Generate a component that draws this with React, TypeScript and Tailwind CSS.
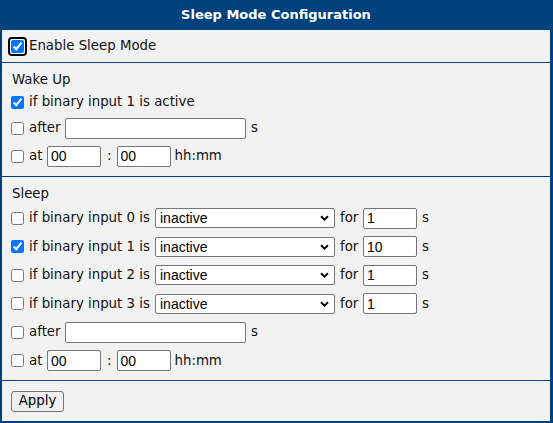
import React from "react";

const font = "font-['DejaVu_Sans',Verdana,sans-serif]";
const fieldFont = "font-['Liberation_Sans',Arial,sans-serif] text-[14px]";

function Check({ on = false }: { on?: boolean }) {
  return (
    <input
      type="checkbox"
      defaultChecked={on}
      className="w-[13px] h-[13px] shrink-0 accent-[#0075ff]"
    />
  );
}

function Field({ value = "", w }: { value?: string; w: string }) {
  return (
    <input
      type="text"
      defaultValue={value}
      className={`${w} h-[21px] shrink-0 bg-white border border-[#767676] rounded-[2px] pl-[3px] text-black ${fieldFont}`}
    />
  );
}

function Select() {
  return (
    <div
      className={`w-[180px] h-[20px] shrink-0 bg-white border border-[#767676] rounded-[2px] pl-[4px] pr-[5px] flex items-center justify-between text-black ${fieldFont}`}
    >
      <span>inactive</span>
      <svg width="9" height="6" viewBox="0 0 9 6">
        <path d="M1 1.2 L4.5 4.6 L8 1.2" fill="none" stroke="#000" strokeWidth="1.9" />
      </svg>
    </div>
  );
}

function After({ h }: { h: string }) {
  return (
    <div className={`${h} flex items-center pl-[9px]`}>
      <Check />
      <span className="ml-[5px] w-[31px] shrink-0">after</span>
      <span className="ml-[5px]">
        <Field w="w-[181px]" />
      </span>
      <span className="ml-[5px]">s</span>
    </div>
  );
}

function At({ h }: { h: string }) {
  return (
    <div className={`${h} flex items-center pl-[9px]`}>
      <Check />
      <span className="ml-[5px] w-[13px] shrink-0">at</span>
      <span className="ml-[5px]">
        <Field value="00" w="w-[54px]" />
      </span>
      <span className="ml-[6px]">:</span>
      <span className="ml-[5px]">
        <Field value="00" w="w-[54px]" />
      </span>
      <span className="ml-[4px]">hh:mm</span>
    </div>
  );
}

const sleepInputs = [
  { n: 0, on: false, t: "1" },
  { n: 1, on: true, t: "10" },
  { n: 2, on: false, t: "1" },
  { n: 3, on: false, t: "1" },
];

export default function App() {
  return (
    <div className={`w-[553px] h-[423px] ${font} text-[13.33px] leading-[16px] text-[#111]`}>
      <div className="h-full flex flex-col bg-[#00427e] pl-[2px] pr-[3px] pb-[2px]">
        <div className="h-[30px] flex items-center justify-center font-bold text-[13px] text-white">
          Sleep Mode Configuration
        </div>

        <div className="h-[32px] flex items-center pl-[6px] bg-[#f2f2f2]">
          <span className="border-2 border-black rounded-[4px] p-[1px] flex bg-white">
            <Check on />
          </span>
          <span className="ml-[2px]">Enable Sleep Mode</span>
        </div>

        <div className="h-[113px] mt-px bg-[#f2f2f2] pt-[7px]">
          <div className="h-[20px] flex items-center pl-[10px]">Wake Up</div>
          <div className="h-[24px] flex items-center pl-[9px]">
            <Check on />
            <span className="ml-[5px]">if binary input 1 is active</span>
          </div>
          <After h="h-[28px]" />
          <At h="h-[28px]" />
        </div>

        <div className="h-[203px] mt-px bg-[#f2f2f2] pt-[7px]">
          <div className="h-[20px] flex items-center pl-[10px]">Sleep</div>
          {sleepInputs.map((r) => (
            <div key={r.n} className="h-[28.5px] flex items-center pl-[9px]">
              <Check on={r.on} />
              <span className="ml-[5px] w-[126px] shrink-0">if binary input {r.n} is</span>
              <Select />
              <span className="ml-[5px] w-[18px] shrink-0">for</span>
              <span className="ml-[5px]">
                <Field value={r.t} w="w-[54px]" />
              </span>
              <span className="ml-[5px]">s</span>
            </div>
          ))}
          <After h="h-[28.5px]" />
          <At h="h-[28.5px]" />
        </div>

        <div className="flex-1 mt-px bg-[#f2f2f2] flex items-center pl-[9px]">
          <button className="w-[53px] h-[21px] bg-[#efefef] border border-[#767676] rounded-[3px] text-black">
            Apply
          </button>
        </div>
      </div>
    </div>
  );
}
